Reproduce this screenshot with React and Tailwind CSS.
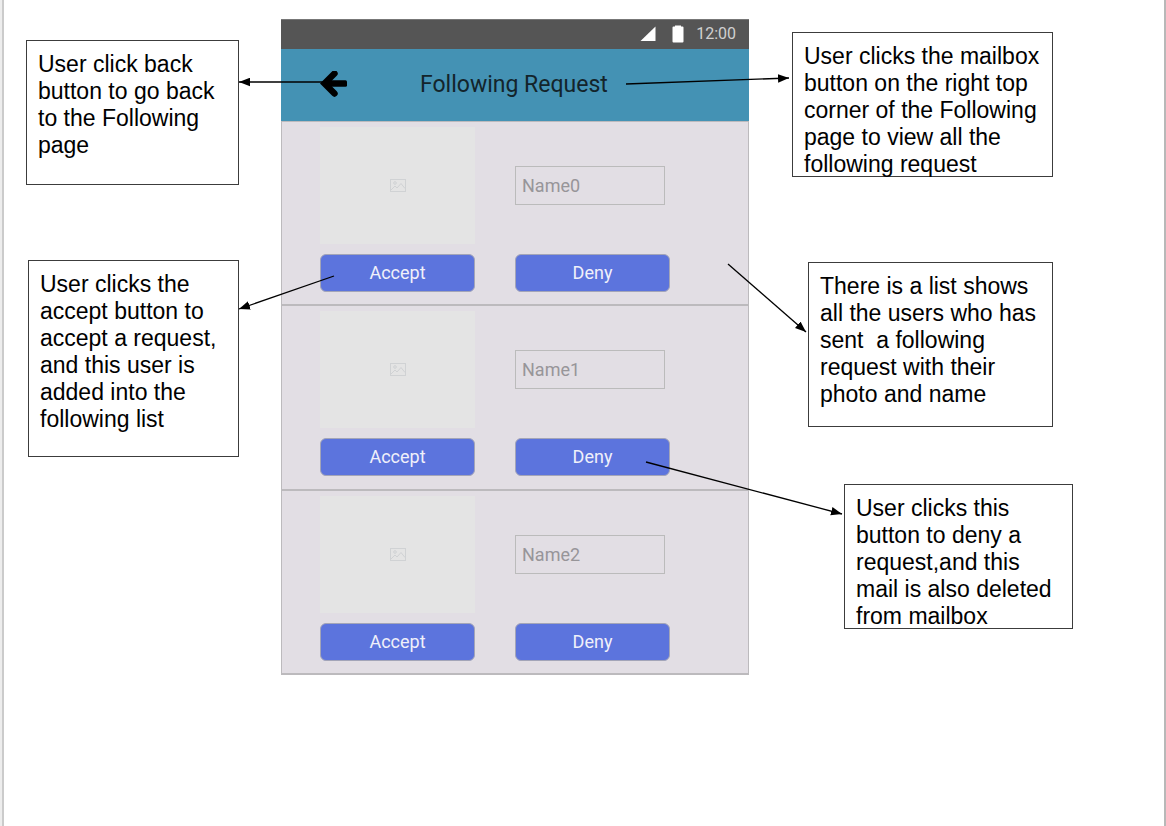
import React from "react";

const requests = ["Name0", "Name1", "Name2"];

const connectors = [
  { x1: 335, y1: 82, x2: 239, y2: 82 },
  { x1: 626, y1: 84, x2: 789, y2: 78 },
  { x1: 334, y1: 276, x2: 239, y2: 309 },
  { x1: 728, y1: 264, x2: 806, y2: 332 },
  { x1: 646, y1: 462, x2: 842, y2: 514 },
];

function Note({ className, children }) {
  return (
    <p
      className={`border border-[#3c3c3c] bg-white pt-[10px] pl-[11px] font-['Liberation_Sans',Arial,sans-serif] text-[23px] leading-[27px] whitespace-pre text-black ${className}`}
    >
      {children}
    </p>
  );
}

function Connectors() {
  return (
    <svg className="pointer-events-none absolute inset-0 h-full w-full" aria-hidden="true">
      <defs>
        <marker
          id="arrowhead"
          markerUnits="userSpaceOnUse"
          markerWidth="12"
          markerHeight="9"
          refX="11"
          refY="4.5"
          orient="auto"
        >
          <path d="M0 0.2L11 4.5L0 8.8Z" fill="#000" />
        </marker>
      </defs>
      {connectors.map((c) => (
        <line key={`${c.x1}-${c.y1}`} {...c} stroke="#000" strokeWidth="1.3" markerEnd="url(#arrowhead)" />
      ))}
    </svg>
  );
}

function StatusBar() {
  return (
    <div className="flex h-[30px] items-center justify-end border-t border-[#777] bg-[#555] pr-[13px] pb-0.5 text-base leading-5 text-[#d0d0d0]">
      <svg className="mr-4 h-[15px] w-4" viewBox="0 0 16 15" aria-hidden="true">
        <path d="M0.5 15L15.5 0.5V15Z" fill="#fff" />
      </svg>
      <svg className="mr-3 h-[18px] w-3" viewBox="0 0 12 18" aria-hidden="true">
        <path d="M3 0.5H9V1.5H10.5Q11.5 1.5 11.5 2.5V16.5Q11.5 17.5 10.5 17.5H1.5Q0.5 17.5 0.5 16.5V2.5Q0.5 1.5 1.5 1.5H3Z" fill="#fff" />
      </svg>
      <span>12:00</span>
    </div>
  );
}

function Header() {
  return (
    <header className="grid h-[72px] grid-cols-[139px_1fr] items-center bg-[#4492b4]">
      <button type="button" aria-label="Back" className="ml-[39px] h-7 w-7">
        <svg viewBox="0 0 28 28" className="h-7 w-7" aria-hidden="true">
          <path d="M14.5 2.5L4.5 12.5L14.5 22.5" fill="none" stroke="#000" strokeWidth="6.4" strokeLinecap="round" />
          <path d="M5 9.3H25.5Q27 9.3 27 10.8V14.2Q27 15.7 25.5 15.7H5Z" fill="#000" />
        </svg>
      </button>
      <h1 className="text-[23px] text-[#13242b]">Following Request</h1>
    </header>
  );
}

function PhotoPlaceholder() {
  return (
    <div className="flex h-[117px] items-center justify-center bg-[#e4e4e4]">
      <svg viewBox="0 0 16 13" className="h-[13px] w-4" fill="none" stroke="#d0d2d4" aria-hidden="true">
        <rect x="0.5" y="0.5" width="15" height="12" />
        <circle cx="5" cy="4" r="1.3" />
        <path d="M1 11L5 7L7 9L11 4.5L15 9.5" />
      </svg>
    </div>
  );
}

const actionClass =
  "h-[38px] rounded-md border border-[#a3a5b8] bg-[#5c74dd] text-lg leading-6 text-[#f0f0fa]";

function RequestRow({ name }) {
  return (
    <li className="grid grid-cols-[155px_155px] grid-rows-[117px_38px] content-start gap-x-10 gap-y-[10px] border-b-2 border-[#bcbabd] pt-[5px] pl-[38px]">
      <PhotoPlaceholder />
      <input
        aria-label="Name"
        readOnly
        value={name}
        className="h-[39px] w-[150px] self-center border border-[#bbb] bg-transparent px-[6px] text-lg text-[#979599] outline-none"
      />
      <button type="button" className={actionClass}>Accept</button>
      <button type="button" className={actionClass}>Deny</button>
    </li>
  );
}

function Phone() {
  return (
    <section className="mt-[19px] w-[468px] shrink-0 font-[Roboto,sans-serif]">
      <StatusBar />
      <Header />
      <ul className="grid h-[554px] grid-rows-3 border-x border-t border-[#bcbabd] bg-[#e2dee4]">
        {requests.map((name) => (
          <RequestRow key={name} name={name} />
        ))}
      </ul>
    </section>
  );
}

export default function App() {
  return (
    <div className="relative min-h-screen bg-[#ededed] pl-0.5">
      <main className="flex min-h-screen items-start border-l-2 border-r-2 border-l-[#cbcbcb] border-r-[#b8b8b8] bg-white pl-[22px]">
        <div className="mt-10 mr-[42px] flex w-[213px] shrink-0 flex-col items-end gap-[75px]">
          <Note className="h-[145px] w-[213px]">{"User click back\nbutton to go back\nto the Following\npage"}</Note>
          <Note className="h-[197px] w-[211px]">
            {"User clicks the\naccept button to\naccept a request,\nand this user is\nadded into the\nfollowing list"}
          </Note>
        </div>
        <Phone />
        <div className="mt-8 ml-[43px] flex shrink-0 flex-col items-start">
          <Note className="h-[145px] w-[261px]">
            {"User clicks the mailbox\nbutton on the right top\ncorner of the Following\npage to view all the\nfollowing request"}
          </Note>
          <Note className="mt-[85px] ml-4 h-[165px] w-[245px]">
            {"There is a list shows\nall the users who has\nsent  a following\nrequest with their\nphoto and name"}
          </Note>
          <Note className="mt-[57px] ml-[52px] h-[145px] w-[229px]">
            {"User clicks this\nbutton to deny a\nrequest,and this\nmail is also deleted\nfrom mailbox"}
          </Note>
        </div>
      </main>
      <Connectors />
    </div>
  );
}
